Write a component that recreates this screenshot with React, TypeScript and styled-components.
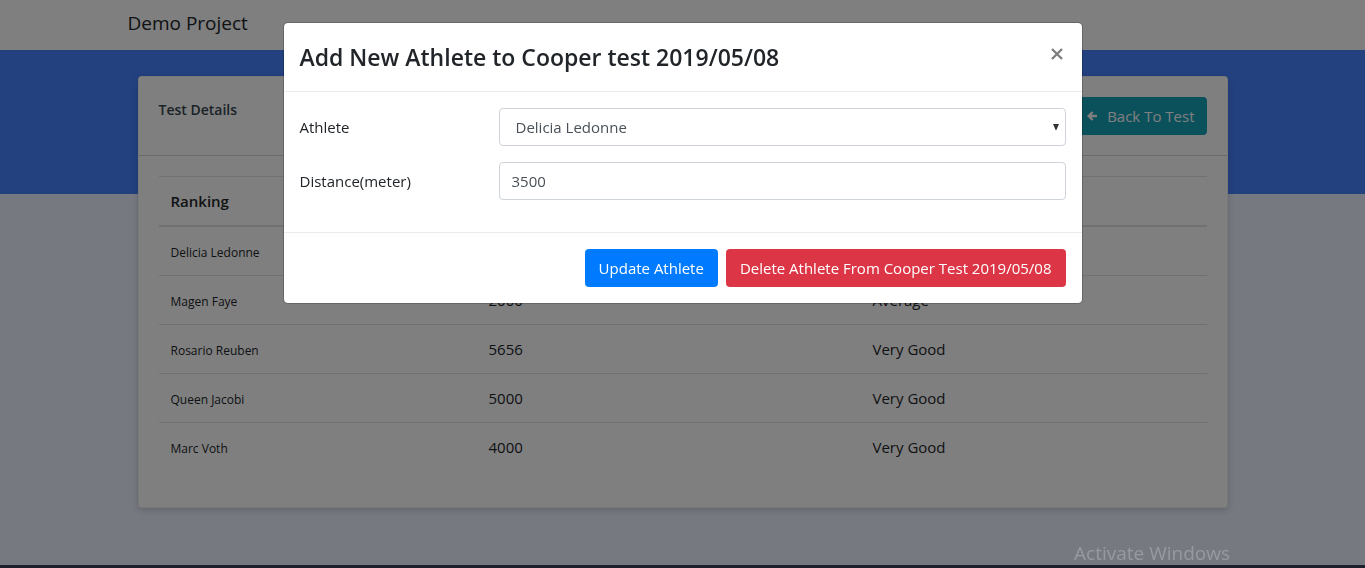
import React, { useState } from "react";
import styled, { createGlobalStyle } from "styled-components";

const GlobalStyle = createGlobalStyle`
  *, *::before, *::after { box-sizing: border-box; }
  body {
    margin: 0;
    background: #ecf3ff;
    color: #212529;
    font-family: "Segoe UI", "Open Sans", "Noto Sans", sans-serif;
    font-size: 15px;
    line-height: 24px;
  }
  button, input, select { font: inherit; }
`;

const Navbar = styled.header`
  height: 50px;
  background: #fff;
`;

const Container = styled.div<{ $gutter: number }>`
  max-width: 1140px;
  margin: 0 auto;
  padding: 0 ${(p) => p.$gutter}px;
`;

const Brand = styled.a`
  display: inline-block;
  padding: 8px 0;
  color: #212529;
  font-size: 19px;
  line-height: 30px;
  text-decoration: none;
`;

const Main = styled.main`
  padding: 26px 0 60px;
  background: linear-gradient(#4680ff 144px, #ecf3ff 144px);
`;

const Card = styled.section`
  border: 1px solid rgba(0, 0, 0, 0.05);
  border-radius: 4px;
  background: #fff;
  box-shadow: 0 2px 6px rgba(43, 43, 43, 0.22);
`;

const CardHeader = styled.div`
  display: flex;
  justify-content: space-between;
  align-items: flex-start;
  padding: 20px;
  border-bottom: 1px solid rgba(0, 0, 0, 0.16);
`;

const CardTitle = styled.h5`
  margin: 0;
  color: #37474f;
  font-size: 14px;
  font-weight: 600;
  line-height: 26px;
`;

const BackLink = styled.a`
  display: inline-flex;
  align-items: center;
  gap: 10px;
  height: 38px;
  padding: 0 12px;
  border-radius: 4px;
  background: #17a2b8;
  color: #fff;
  text-decoration: none;
`;

const CardBody = styled.div`
  padding: 20px 20px 36px;
`;

const Table = styled.table`
  width: 100%;
  border-spacing: 0;
  table-layout: fixed;
`;

const HeadCell = styled.th<{ $width?: string }>`
  width: ${(p) => p.$width ?? "auto"};
  height: 51px;
  padding: 12px;
  border-top: 1px solid #dee2e6;
  border-bottom: 2px solid #dee2e6;
  font-weight: 600;
  text-align: left;
`;

const Cell = styled.td<{ $small?: boolean }>`
  height: 49px;
  padding: ${(p) => (p.$small ? "14px 12px 10px" : "12px")};
  border-top: 1px solid #dee2e6;
  font-size: ${(p) => (p.$small ? 12 : 15)}px;

  tr:first-child > & {
    height: 48px;
    border-top: 0;
  }
`;

const Backdrop = styled.div`
  position: fixed;
  inset: 0;
  display: flex;
  justify-content: center;
  align-items: flex-start;
  padding: 22px 16px;
  background: rgba(0, 0, 0, 0.5);
`;

const Dialog = styled.form`
  width: 100%;
  max-width: 800px;
  border: 1px solid rgba(0, 0, 0, 0.2);
  border-radius: 5px;
  background: #fff;
  background-clip: padding-box;
`;

const DialogHeader = styled.div`
  display: flex;
  justify-content: space-between;
  align-items: flex-start;
  padding: 16px;
  border-bottom: 1px solid #e9ecef;
`;

const DialogTitle = styled.h4`
  margin: 0;
  font-size: 23px;
  font-weight: 600;
  line-height: 36px;
`;

const CloseButton = styled.button`
  display: flex;
  padding: 9px 3px;
  border: 0;
  background: none;
  color: #7f7f7f;
  cursor: pointer;
`;

const DialogBody = styled.div`
  padding: 16px 16px 32px;
  display: grid;
  gap: 16px;
`;

const Field = styled.div`
  display: flex;
  gap: 30px;
`;

const Label = styled.label`
  flex: 169 1 0;
  padding: 7px 0;
`;

const FieldControl = styled.div`
  position: relative;
  flex: 567 1 0;
`;

const Input = styled.input`
  display: block;
  width: 100%;
  height: 38px;
  padding: 6px 12px;
  border: 1px solid #ced4da;
  border-radius: 4px;
  background: #fff;
  color: #495057;
`;

const Select = styled.select`
  display: block;
  width: 100%;
  height: 38px;
  padding: 6px 16px;
  border: 1px solid #ced4da;
  border-radius: 4px;
  background: #fff;
  color: #495057;
  appearance: none;
`;

const SelectArrow = styled.svg`
  position: absolute;
  top: 16px;
  right: 7px;
  pointer-events: none;
`;

const DialogFooter = styled.div`
  display: flex;
  justify-content: flex-end;
  gap: 8px;
  padding: 16px;
  border-top: 1px solid #e9ecef;
`;

const Button = styled.button<{ $color: string }>`
  height: 38px;
  padding: 0 14px;
  border: 0;
  border-radius: 4px;
  background: ${(p) => p.$color};
  color: #fff;
  cursor: pointer;
`;

const Watermark = styled.div`
  position: fixed;
  right: 135px;
  bottom: 0;
  color: #969aa2;
  font-size: 19px;
  line-height: 30px;
`;

const Taskbar = styled.div`
  position: fixed;
  right: 0;
  bottom: 0;
  left: 0;
  height: 3px;
  background: #1d212c;
`;

const athletes = [
  { name: "Delicia Ledonne", distance: "", rating: "" },
  { name: "Magen Faye", distance: "2000", rating: "Average" },
  { name: "Rosario Reuben", distance: "5656", rating: "Very Good" },
  { name: "Queen Jacobi", distance: "5000", rating: "Very Good" },
  { name: "Marc Voth", distance: "4000", rating: "Very Good" },
];

export default function App() {
  const [athlete, setAthlete] = useState("Delicia Ledonne");
  const [distance, setDistance] = useState("3500");

  return (
    <>
      <GlobalStyle />
      <Navbar>
        <Container $gutter={15}>
          <Brand href="#">Demo Project</Brand>
        </Container>
      </Navbar>
      <Main>
        <Container $gutter={25}>
          <Card>
            <CardHeader>
              <CardTitle>Test Details</CardTitle>
              <BackLink href="#">
                <svg width="10" height="10" viewBox="0 0 10 10" fill="none" stroke="currentColor" strokeWidth="2.4" aria-hidden="true">
                  <path d="M10 5H2M5.6 1L1.7 5l3.9 4" />
                </svg>
                Back To Test
              </BackLink>
            </CardHeader>
            <CardBody>
              <Table>
                <thead>
                  <tr>
                    <HeadCell $width="318px">Ranking</HeadCell>
                    <HeadCell $width="384px" aria-label="Distance" />
                    <HeadCell aria-label="Rating" />
                  </tr>
                </thead>
                <tbody>
                  {athletes.map((a) => (
                    <tr key={a.name}>
                      <Cell $small>{a.name}</Cell>
                      <Cell>{a.distance}</Cell>
                      <Cell>{a.rating}</Cell>
                    </tr>
                  ))}
                </tbody>
              </Table>
            </CardBody>
          </Card>
        </Container>
      </Main>
      <Backdrop>
        <Dialog role="dialog" aria-labelledby="dialog-title" onSubmit={(e) => e.preventDefault()}>
          <DialogHeader>
            <DialogTitle id="dialog-title">Add New Athlete to Cooper test 2019/05/08</DialogTitle>
            <CloseButton type="button" aria-label="Close">
              <svg width="12" height="12" viewBox="0 0 12 12" stroke="currentColor" strokeWidth="2.4" aria-hidden="true">
                <path d="M1 1l10 10M11 1L1 11" />
              </svg>
            </CloseButton>
          </DialogHeader>
          <DialogBody>
            <Field>
              <Label htmlFor="athlete">Athlete</Label>
              <FieldControl>
                <Select id="athlete" value={athlete} onChange={(e) => setAthlete(e.target.value)}>
                  {athletes.map((a) => (
                    <option key={a.name}>{a.name}</option>
                  ))}
                </Select>
                <SelectArrow width="6" height="6" viewBox="0 0 6 6" fill="#333" aria-hidden="true">
                  <path d="M0 0h6L3.4 6h-.8z" />
                </SelectArrow>
              </FieldControl>
            </Field>
            <Field>
              <Label htmlFor="distance">Distance(meter)</Label>
              <FieldControl>
                <Input id="distance" value={distance} onChange={(e) => setDistance(e.target.value)} />
              </FieldControl>
            </Field>
          </DialogBody>
          <DialogFooter>
            <Button $color="#007bff" type="submit">Update Athlete</Button>
            <Button $color="#dc3545" type="button">Delete Athlete From Cooper Test 2019/05/08</Button>
          </DialogFooter>
        </Dialog>
      </Backdrop>
      <Watermark>Activate Windows</Watermark>
      <Taskbar />
    </>
  );
}
